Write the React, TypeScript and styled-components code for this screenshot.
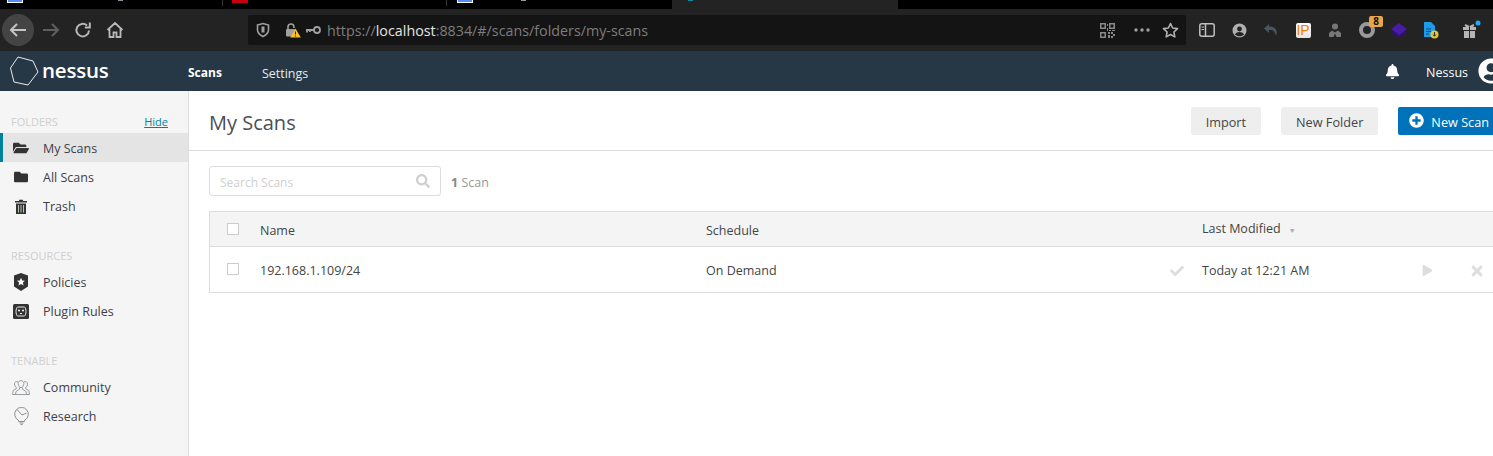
import React from 'react';
import styled, { createGlobalStyle } from 'styled-components';
import {
  FaBell,
  FaCheck,
  FaFolder,
  FaFolderOpen,
  FaPlay,
  FaPlusCircle,
  FaSearch,
  FaTimes,
  FaUserCircle,
} from 'react-icons/fa';

const GlobalStyle = createGlobalStyle`
  html, body {
    margin: 0;
    padding: 0;
    background: #fff;
    overflow: hidden;
  }
  body {
    font-family: 'Open Sans', 'Noto Sans', sans-serif;
    font-size: 12.5px;
    color: #3a3f45;
  }
`;

const Page = styled.div`
  width: 1493px;
  height: 456px;
  display: flex;
  flex-direction: column;
  overflow: hidden;
`;

const TabStrip = styled.div`
  height: 9px;
  background: #000;
  display: flex;
  flex-shrink: 0;
`;

const Tab = styled.div<{ $width: number; $inset: number; $active?: boolean }>`
  width: ${(p) => p.$width}px;
  height: 9px;
  background: ${(p) => (p.$active ? '#232323' : 'transparent')};
  box-sizing: border-box;
  padding-left: ${(p) => p.$inset}px;
  display: flex;
  align-items: flex-start;
`;

const TabIcon = styled.div<{ $color: string }>`
  width: 16px;
  height: 3px;
  box-sizing: border-box;
  background: ${(p) => p.$color};
  border: 1px solid ${(p) => (p.$color === '#4f8ff0' ? '#fff' : p.$color)};
  border-top: none;
`;

const TabTitleBit = styled.div<{ $gap: number; $color: string }>`
  width: 5px;
  height: 1px;
  margin-left: ${(p) => p.$gap}px;
  background: ${(p) => p.$color};
`;

const TabDivider = styled.div`
  width: 1px;
  height: 6px;
  margin-left: auto;
  background: #3a3a3a;
`;

const BrowserBar = styled.div`
  height: 42px;
  background: #232323;
  display: flex;
  align-items: center;
  flex-shrink: 0;
`;

const NavGroup = styled.div`
  width: 248px;
  display: flex;
  align-items: center;
  padding-left: 2px;
  box-sizing: border-box;
  flex-shrink: 0;
`;

const NavButton = styled.div<{ $round?: boolean }>`
  width: 32px;
  height: 32px;
  margin-right: ${(p) => (p.$round ? 1 : 0)}px;
  border-radius: 50%;
  display: flex;
  align-items: center;
  justify-content: center;
  background: ${(p) => (p.$round ? '#444' : 'transparent')};
`;

const UrlBar = styled.div`
  width: 938px;
  height: 30px;
  background: #141414;
  border-radius: 2px;
  display: flex;
  align-items: center;
  padding: 0 7px;
  box-sizing: border-box;
  flex-shrink: 0;
`;

const UrlSecurity = styled.div`
  width: 72px;
  display: flex;
  align-items: center;
  gap: 4px;
  flex-shrink: 0;
`;

const ShieldSlot = styled.span`
  display: flex;
  margin-right: 10px;
`;

const UrlText = styled.div`
  flex: 1;
  font-size: 14.3px;
  color: #7d7d7d;
`;

const UrlHost = styled.span`
  color: #e4e4e4;
`;

const UrlActions = styled.div`
  display: flex;
  align-items: center;
  gap: 11px;
`;

const QrSlot = styled.span`
  display: flex;
  margin-right: 7px;
`;

const Toolbar = styled.div`
  flex: 1;
  display: flex;
  align-items: center;
  padding-left: 5px;
`;

const ToolSlot = styled.div<{ $width?: number }>`
  position: relative;
  width: ${(p) => p.$width ?? 32}px;
  height: 24px;
  display: flex;
  align-items: center;
  justify-content: center;
  flex-shrink: 0;
`;

const Badge = styled.div`
  position: absolute;
  top: -2px;
  right: 0;
  width: 14px;
  height: 11px;
  background: #e9a64a;
  border-radius: 2px;
  color: #111;
  font-size: 10px;
  font-weight: 700;
  line-height: 11px;
  text-align: center;
`;

const IpIcon = styled.div`
  width: 15px;
  height: 15px;
  background: linear-gradient(#fff, #e4e4e4);
  border-radius: 2px;
  color: #f07d00;
  font-family: 'Liberation Sans', sans-serif;
  font-size: 14px;
  line-height: 15px;
  text-align: center;
`;

const AppHeader = styled.header`
  height: 40px;
  background: #263746;
  display: flex;
  align-items: center;
  flex-shrink: 0;
`;

const Logo = styled.div`
  width: 188px;
  padding-left: 10px;
  box-sizing: border-box;
  display: flex;
  align-items: center;
  gap: 2px;
  flex-shrink: 0;
`;

const LogoWord = styled.span`
  font-weight: 600;
  font-size: 20.5px;
  color: #fff;
  line-height: 1;
  letter-spacing: -0.2px;
  margin-top: -2px;
`;

const HeaderLink = styled.div<{ $active?: boolean }>`
  color: #fff;
  font-size: ${(p) => (p.$active ? 12 : 12.5)}px;
  font-weight: ${(p) => (p.$active ? 700 : 400)};
  margin-right: ${(p) => (p.$active ? 40 : 0)}px;
  padding-top: ${(p) => (p.$active ? 2 : 4)}px;
  opacity: ${(p) => (p.$active ? 1 : 0.9)};
`;

const HeaderRight = styled.div`
  margin-left: auto;
  display: flex;
  align-items: center;
  color: #fff;
  margin-right: -11px;
`;

const HeaderUser = styled.span`
  font-size: 12.5px;
  margin: 3px 10px 0 26px;
`;

const Body = styled.div`
  flex: 1;
  display: flex;
  min-height: 0;
`;

const Sidebar = styled.aside`
  width: 189px;
  box-sizing: border-box;
  background: #f5f5f5;
  border-right: 1px solid #ddd;
  padding-top: 24px;
  flex-shrink: 0;
`;

const SectionTitle = styled.div<{ $gap?: number }>`
  display: flex;
  justify-content: space-between;
  align-items: center;
  height: 14px;
  box-sizing: border-box;
  padding: 0 20px 2px 11px;
  margin-top: ${(p) => p.$gap ?? 0}px;
  margin-bottom: 4px;
  color: #cfcfcf;
  font-size: 11px;
`;

const HideLink = styled.a`
  color: #00829b;
  font-size: 11px;
  text-decoration: underline;
`;

const NavItem = styled.div<{ $active?: boolean }>`
  height: 29px;
  display: flex;
  align-items: center;
  box-sizing: border-box;
  padding: 1px 0 0 ${(p) => (p.$active ? 9 : 12)}px;
  background: ${(p) => (p.$active ? '#e4e4e4' : 'transparent')};
  border-left: ${(p) => (p.$active ? '3px solid #00829b' : 'none')};
  font-size: 12.5px;
  color: #3d3f4a;
`;

const NavIcon = styled.span`
  width: 18px;
  margin-right: 13px;
  display: flex;
  align-items: center;
  justify-content: center;
  color: #333;
`;

const Main = styled.main`
  flex: 1;
  min-width: 0;
  display: flex;
  flex-direction: column;
`;

const TitleBar = styled.div`
  height: 60px;
  box-sizing: border-box;
  border-bottom: 1px solid #ddd;
  display: flex;
  align-items: center;
  padding-left: 20px;
  flex-shrink: 0;
`;

const PageTitle = styled.h1`
  margin: 3px 0 0;
  font-size: 20px;
  font-weight: 400;
  color: #4a4f55;
`;

const Actions = styled.div`
  margin-left: auto;
  display: flex;
  gap: 20px;
  margin-right: -11px;
  margin-top: 1px;
`;

const Button = styled.div<{ $primary?: boolean }>`
  height: 28px;
  padding: 0 15px 0 ${(p) => (p.$primary ? 11 : 15)}px;
  border-radius: 2px;
  background: ${(p) => (p.$primary ? '#0072b9' : '#eeeeee')};
  color: ${(p) => (p.$primary ? '#fff' : '#444')};
  display: flex;
  align-items: center;
  gap: 7px;
  font-size: 12.7px;
`;

const ButtonLabel = styled.span`
  padding-top: 2px;
`;

const ButtonIcon = styled.span`
  display: flex;
  margin-top: -2px;
`;

const SearchRow = styled.div`
  display: flex;
  align-items: center;
  padding: 15px 0 0 20px;
`;

const SearchBox = styled.div`
  width: 232px;
  height: 30px;
  box-sizing: border-box;
  border: 1px solid #ddd;
  border-radius: 3px;
  display: flex;
  align-items: center;
  justify-content: space-between;
  padding: 0 10px;
  color: #cfcfcf;
  font-size: 12px;
`;

const SearchPlaceholder = styled.span`
  padding-top: 2px;
`;

const Count = styled.div`
  margin-left: 10px;
  padding-top: 2px;
  color: #999;
  font-size: 12.5px;
`;

const CountNumber = styled.b`
  color: #888;
`;

const Table = styled.div`
  margin: 15px 0 0 20px;
  border: 1px solid #ddd;
  border-right: none;
  width: 1300px;
`;

const Row = styled.div<{ $head?: boolean }>`
  display: grid;
  grid-template-columns: 50px 446px 464px 32px 221px 48px 40px;
  height: ${(p) => (p.$head ? 35 : 45)}px;
  align-items: center;
  background: ${(p) => (p.$head ? '#f4f4f4' : '#fff')};
  border-bottom: ${(p) => (p.$head ? '1px solid #ddd' : 'none')};
  box-sizing: border-box;
  font-size: 12.5px;
  color: #444;
`;

const CheckCell = styled.div<{ $lift?: boolean }>`
  display: flex;
  padding-left: 17px;
  margin-bottom: ${(p) => (p.$lift ? 2 : 0)}px;
`;

const CheckBox = styled.div`
  width: 12px;
  height: 12px;
  box-sizing: border-box;
  border: 1px solid #ccc;
  background: #fff;
`;

const CellText = styled.div<{ $lift?: boolean }>`
  margin-top: ${(p) => (p.$lift ? 0 : 2)}px;
  margin-bottom: ${(p) => (p.$lift ? 2 : 0)}px;
`;

const Caret = styled.span`
  display: inline-block;
  color: #aaa;
  font-size: 7px;
  margin-left: 8px;
`;

const RowIcon = styled.div<{ $nudge?: number }>`
  color: #ddd;
  display: flex;
  align-items: center;
  margin-top: 2px;
  margin-left: ${(p) => p.$nudge ?? 0}px;
`;

function ShieldGlyph() {
  return (
    <svg width="16" height="16" viewBox="0 0 16 16" fill="none" stroke="#a0a0a0" strokeWidth="1.6">
      <path d="M2.5 3 8 1.5 13.5 3v5c0 3-2.5 5-5.5 6.5C5 13 2.5 11 2.5 8z" />
      <path d="M8 4.5v6" strokeWidth="3" />
    </svg>
  );
}

function LockGlyph() {
  return (
    <svg width="16" height="16" viewBox="0 0 16 16">
      <path d="M3 7V5a3 3 0 0 1 6 0v1" fill="none" stroke="#a0a0a0" strokeWidth="1.6" />
      <rect x="1" y="7" width="9" height="7.5" rx="1" fill="#a0a0a0" />
      <path d="M10.5 6.5 15.8 15.5H5.2z" fill="#fbbf24" />
      <path d="M10.5 9.5v3M10.5 13.5v1" stroke="#222" strokeWidth="1" />
    </svg>
  );
}

function KeyGlyph() {
  return (
    <svg width="16" height="12" viewBox="0 0 16 12" fill="none" stroke="#a0a0a0" strokeWidth="1.8">
      <circle cx="12" cy="6" r="3" />
      <path d="M9 6H1M2 6v2.5M5 6v2" />
    </svg>
  );
}

function ArrowGlyph({ back }: { back?: boolean }) {
  return (
    <svg width="18" height="16" viewBox="0 0 18 16" fill="none" stroke={back ? '#c4c4c4' : '#5f5f5f'} strokeWidth="2">
      <path d={back ? 'M17 8H2M8 2 2 8l6 6' : 'M1 8h15M10 2l6 6-6 6'} />
    </svg>
  );
}

function ReloadGlyph() {
  return (
    <svg width="18" height="18" viewBox="0 0 18 18" fill="none" stroke="#b8b8b8" strokeWidth="2">
      <path d="M15 9.5A6.3 6.3 0 1 1 13 4.5" />
      <path d="M15.8 1.5v5h-5" />
    </svg>
  );
}

function HomeGlyph() {
  return (
    <svg width="18" height="18" viewBox="0 0 18 18" fill="none" stroke="#b8b8b8" strokeWidth="1.8">
      <path d="M1.5 9 9 2l7.5 7M3.5 8v8h4v-4.5h3V16h4V8" />
    </svg>
  );
}

function QrGlyph() {
  return (
    <svg width="15" height="15" viewBox="0 0 15 15" fill="#8a8a8a">
      <path d="M0 0h6v6H0zM1.5 1.5v3h3v-3zM9 0h6v6H9zM10.5 1.5v3h3v-3zM0 9h6v6H0zM1.5 10.5v3h3v-3z" fillRule="evenodd" />
      <path d="M7 1h1v2H7zM7 5h1v3H7zM9 7h2v1H9zM12 7h3v1h-3zM8 9h2v2H8zM11 9h2v2h-2zM13 11h2v2h-2zM8 12h2v3H8zM11 13h2v2h-2z" />
    </svg>
  );
}

function DotsGlyph() {
  return (
    <svg width="18" height="4" viewBox="0 0 18 4" fill="#a0a0a0">
      <circle cx="3" cy="2" r="1.7" />
      <circle cx="9" cy="2" r="1.7" />
      <circle cx="15" cy="2" r="1.7" />
    </svg>
  );
}

function StarGlyph() {
  return (
    <svg width="17" height="17" viewBox="0 0 17 17" fill="none" stroke="#b0b0b0" strokeWidth="1.6" strokeLinejoin="round">
      <path d="M8.5 1.5 10.6 6l4.9.6-3.6 3.4.9 4.9-4.3-2.4-4.3 2.4.9-4.9L1.5 6.6 6.4 6z" />
    </svg>
  );
}

function SidebarGlyph() {
  return (
    <svg width="16" height="14" viewBox="0 0 16 14" fill="none" stroke="#c0c0c0" strokeWidth="1.5">
      <rect x="0.8" y="0.8" width="14.4" height="12.4" rx="2" />
      <path d="M6.5 1v12" />
      <path d="M2.5 4h2.5M2.5 6.5h2.5" strokeWidth="1" />
    </svg>
  );
}

function AccountGlyph() {
  return (
    <svg width="15" height="15" viewBox="0 0 15 15">
      <circle cx="7.5" cy="7.5" r="7" fill="#b0b0b0" />
      <circle cx="7.5" cy="6" r="2.4" fill="#232323" />
      <path d="M3 11.5c1-2 2.6-2.6 4.5-2.6s3.5.6 4.5 2.6c-1.2 1.2-2.8 1.8-4.5 1.8S4.2 12.7 3 11.5z" fill="#232323" />
    </svg>
  );
}

function ReplyGlyph() {
  return (
    <svg width="16" height="14" viewBox="0 0 16 14" fill="#4a5560">
      <path d="M6 1 1 5.5 6 10V7c4 0 6 1 7 6 2-5 0-9.500-7-9.500z" />
    </svg>
  );
}

function SpyGlyph() {
  return (
    <svg width="14" height="15" viewBox="0 0 14 15" fill="#777">
      <circle cx="7" cy="3.5" r="3" />
      <path d="M1 14V10l3-2.500 3 2 3-2 3 2.500v4H8.500L7 10.500 5.500 14z" />
    </svg>
  );
}

function RingGlyph() {
  return (
    <svg width="16" height="16" viewBox="0 0 16 16" fill="none" stroke="#9a9a9a" strokeWidth="4">
      <circle cx="8" cy="8" r="6" />
    </svg>
  );
}

function LayersGlyph() {
  return (
    <svg width="16" height="16" viewBox="0 0 16 16">
      <path d="M0 10.5 8 6l8 4.5L8 15.5z" fill="#2c1470" />
      <path d="M0 7 8 1l8 6-8 6z" fill="#4a1aa8" />
    </svg>
  );
}

function DocGlyph() {
  return (
    <svg width="16" height="18" viewBox="0 0 16 18">
      <path d="M1 1h7l4 4v11H1z" fill="#1e9be8" />
      <path d="M3 8h5M3 10.5h5M3 13h3" stroke="#0a4a80" strokeWidth="1" />
      <circle cx="11.5" cy="13.5" r="4" fill="#e8c72e" />
      <path d="M11.5 11v4M9.8 13.5l1.700 1.700 1.700-1.700" fill="none" stroke="#333" strokeWidth="1" />
    </svg>
  );
}

function GiftGlyph() {
  return (
    <svg width="20" height="20" viewBox="0 0 20 20">
      <path d="M1 7h6v3H1zM8 7h6v3H8zM2 11h5v7H2zM8 11h5v7H8z" fill="#b5b5b5" />
      <path d="M3 5l4 2M12 5L8 7" stroke="#b5b5b5" strokeWidth="2" />
      <circle cx="16" cy="3" r="2.5" fill="#1ea7fd" />
    </svg>
  );
}

function HexLogo() {
  return (
    <svg width="30" height="30" viewBox="0 0 30 30" fill="none" stroke="#fff" strokeWidth="0.9">
      <path d="M8 1 23 5 28 16 18 29 4 26 0.5 12z" />
    </svg>
  );
}

function TrashGlyph() {
  return (
    <svg width="12" height="15" viewBox="0 0 12 15">
      <path d="M4 2V.8h4V2h4v1.500H0V2z" fill="#333" />
      <path d="M1 4.500h10V15H1z" fill="#333" />
      <path d="M3.500 6v7.500M6 6v7.500M8.500 6v7.500" stroke="#b5c4b0" strokeWidth="1" />
    </svg>
  );
}

function PolicyGlyph() {
  return (
    <svg width="14" height="18" viewBox="0 0 14 18">
      <path d="M7 0 14 2.500V13.500L7 18 0 13.500V2.500z" fill="#333" />
      <path d="M7 4.800l1.200 2.600 2.800.3-2.100 1.900.6 2.800L7 11 4.500 12.400l.6-2.800L3 7.700l2.800-.3z" fill="#fff" />
    </svg>
  );
}

function PluginGlyph() {
  return (
    <svg width="16" height="15" viewBox="0 0 16 15">
      <rect width="16" height="15" rx="1.5" fill="#333" />
      <path d="M4.500 3h7c2 1.500 2 7.500 0 9h-7c-2-1.500-2-7.500 0-9z" fill="none" stroke="#e8e8e8" strokeWidth="1" />
      <circle cx="6" cy="6.5" r="1" fill="#fff" />
      <circle cx="10" cy="6.5" r="1" fill="#fff" />
      <path d="M7 9.500h2" stroke="#fff" strokeWidth="1" />
    </svg>
  );
}

function CommunityGlyph() {
  return (
    <svg width="18" height="15" viewBox="0 0 18 15" fill="none" stroke="#80868c" strokeWidth="0.8">
      <path d="M6.200 3.500C6.200 1.800 7.400.6 9 .6s2.800 1.200 2.800 2.900S10.600 7.600 9 7.600 6.200 5.200 6.200 3.500z" />
      <path d="M7.500 7.400v1.800L4 11.500 3.400 14.500h11.200L14 11.500l-3.500-2.300V7.400" />
      <path d="M6 2C4.500.9 2.500 1.900 2.500 4c0 1.500.8 3 1.800 3.400v1.300L1.200 10.500.5 14.500h3" />
      <path d="M12 2c1.500-1.100 3.500-.1 3.500 2 0 1.500-.8 3-1.800 3.400v1.300l3.100 1.800.7 4h-3" />
    </svg>
  );
}

function ResearchGlyph() {
  return (
    <svg width="15" height="18" viewBox="0 0 15 18" fill="none" stroke="#80868c" strokeWidth="0.9">
      <path d="M4.500 13.300a6.800 6.800 0 1 1 6 0v1.200h-6z" />
      <path d="M3 2.500l5 5.500 4.500-2M5.500 16h4M6.500 17.500h2" />
    </svg>
  );
}

const tabs = [
  { width: 223, inset: 7, color: '#4f8ff0', bit: { gap: 95, color: '#8a8f99' }, divider: true },
  { width: 224, inset: 9, color: '#c4000f', divider: true },
  { width: 225, inset: 10, color: '#4f8ff0', bit: { gap: 48, color: '#9a9a9a' } },
];

const folders = [
  { label: 'My Scans', icon: <FaFolderOpen size={16} />, active: true },
  { label: 'All Scans', icon: <FaFolder size={14} /> },
  { label: 'Trash', icon: <TrashGlyph /> },
];

const resources = [
  { label: 'Policies', icon: <PolicyGlyph /> },
  { label: 'Plugin Rules', icon: <PluginGlyph /> },
];

const tenable = [
  { label: 'Community', icon: <CommunityGlyph /> },
  { label: 'Research', icon: <ResearchGlyph /> },
];

export default function App() {
  return (
    <Page>
      <GlobalStyle />
      <TabStrip>
        {tabs.map((t) => (
          <Tab key={t.width} $width={t.width} $inset={t.inset}>
            <TabIcon $color={t.color} />
            {t.bit && <TabTitleBit $gap={t.bit.gap} $color={t.bit.color} />}
            {t.divider && <TabDivider />}
          </Tab>
        ))}
        <Tab $width={226} $inset={0} $active>
          <TabTitleBit $gap={16} $color="#0a8a96" />
        </Tab>
      </TabStrip>
      <BrowserBar>
        <NavGroup>
          <NavButton $round>
            <ArrowGlyph back />
          </NavButton>
          <NavButton>
            <ArrowGlyph />
          </NavButton>
          <NavButton>
            <ReloadGlyph />
          </NavButton>
          <NavButton>
            <HomeGlyph />
          </NavButton>
        </NavGroup>
        <UrlBar>
          <UrlSecurity>
            <ShieldSlot>
              <ShieldGlyph />
            </ShieldSlot>
            <LockGlyph />
            <KeyGlyph />
          </UrlSecurity>
          <UrlText>
            https://<UrlHost>localhost</UrlHost>:8834/#/scans/folders/my-scans
          </UrlText>
          <UrlActions>
            <QrSlot>
              <QrGlyph />
            </QrSlot>
            <DotsGlyph />
            <StarGlyph />
          </UrlActions>
        </UrlBar>
        <Toolbar>
          <ToolSlot>
            <SidebarGlyph />
          </ToolSlot>
          <ToolSlot>
            <AccountGlyph />
          </ToolSlot>
          <ToolSlot>
            <ReplyGlyph />
          </ToolSlot>
          <ToolSlot>
            <IpIcon>IP</IpIcon>
          </ToolSlot>
          <ToolSlot>
            <SpyGlyph />
          </ToolSlot>
          <ToolSlot>
            <RingGlyph />
            <Badge>8</Badge>
          </ToolSlot>
          <ToolSlot>
            <LayersGlyph />
          </ToolSlot>
          <ToolSlot>
            <DocGlyph />
          </ToolSlot>
          <ToolSlot $width={50}>
            <GiftGlyph />
          </ToolSlot>
        </Toolbar>
      </BrowserBar>
      <AppHeader>
        <Logo>
          <HexLogo />
          <LogoWord>nessus</LogoWord>
        </Logo>
        <HeaderLink $active>Scans</HeaderLink>
        <HeaderLink>Settings</HeaderLink>
        <HeaderRight>
          <FaBell size={15} />
          <HeaderUser>Nessus</HeaderUser>
          <FaUserCircle size={26} />
        </HeaderRight>
      </AppHeader>
      <Body>
        <Sidebar>
          <SectionTitle>
            <span>FOLDERS</span>
            <HideLink>Hide</HideLink>
          </SectionTitle>
          {folders.map((f) => (
            <NavItem key={f.label} $active={f.active}>
              <NavIcon>{f.icon}</NavIcon>
              {f.label}
            </NavItem>
          ))}
          <SectionTitle $gap={29}>
            <span>RESOURCES</span>
          </SectionTitle>
          {resources.map((f) => (
            <NavItem key={f.label}>
              <NavIcon>{f.icon}</NavIcon>
              {f.label}
            </NavItem>
          ))}
          <SectionTitle $gap={29}>
            <span>TENABLE</span>
          </SectionTitle>
          {tenable.map((f) => (
            <NavItem key={f.label}>
              <NavIcon>{f.icon}</NavIcon>
              {f.label}
            </NavItem>
          ))}
        </Sidebar>
        <Main>
          <TitleBar>
            <PageTitle>My Scans</PageTitle>
            <Actions>
              <Button>
                <ButtonLabel>Import</ButtonLabel>
              </Button>
              <Button>
                <ButtonLabel>New Folder</ButtonLabel>
              </Button>
              <Button $primary>
                <ButtonIcon>
                  <FaPlusCircle size={15} />
                </ButtonIcon>
                <ButtonLabel>New Scan</ButtonLabel>
              </Button>
            </Actions>
          </TitleBar>
          <SearchRow>
            <SearchBox>
              <SearchPlaceholder>Search Scans</SearchPlaceholder>
              <FaSearch size={14} />
            </SearchBox>
            <Count>
              <CountNumber>1</CountNumber> Scan
            </Count>
          </SearchRow>
          <Table>
            <Row $head>
              <CheckCell>
                <CheckBox />
              </CheckCell>
              <CellText>Name</CellText>
              <CellText>Schedule</CellText>
              <div />
              <CellText $lift>
                Last Modified<Caret>▼</Caret>
              </CellText>
              <div />
              <div />
            </Row>
            <Row>
              <CheckCell $lift>
                <CheckBox />
              </CheckCell>
              <CellText>192.168.1.109/24</CellText>
              <CellText>On Demand</CellText>
              <RowIcon>
                <FaCheck size={14} />
              </RowIcon>
              <CellText>Today at 12:21 AM</CellText>
              <RowIcon $nudge={-1}>
                <FaPlay size={11} />
              </RowIcon>
              <RowIcon $nudge={-2}>
                <FaTimes size={16} />
              </RowIcon>
            </Row>
          </Table>
        </Main>
      </Body>
    </Page>
  );
}
